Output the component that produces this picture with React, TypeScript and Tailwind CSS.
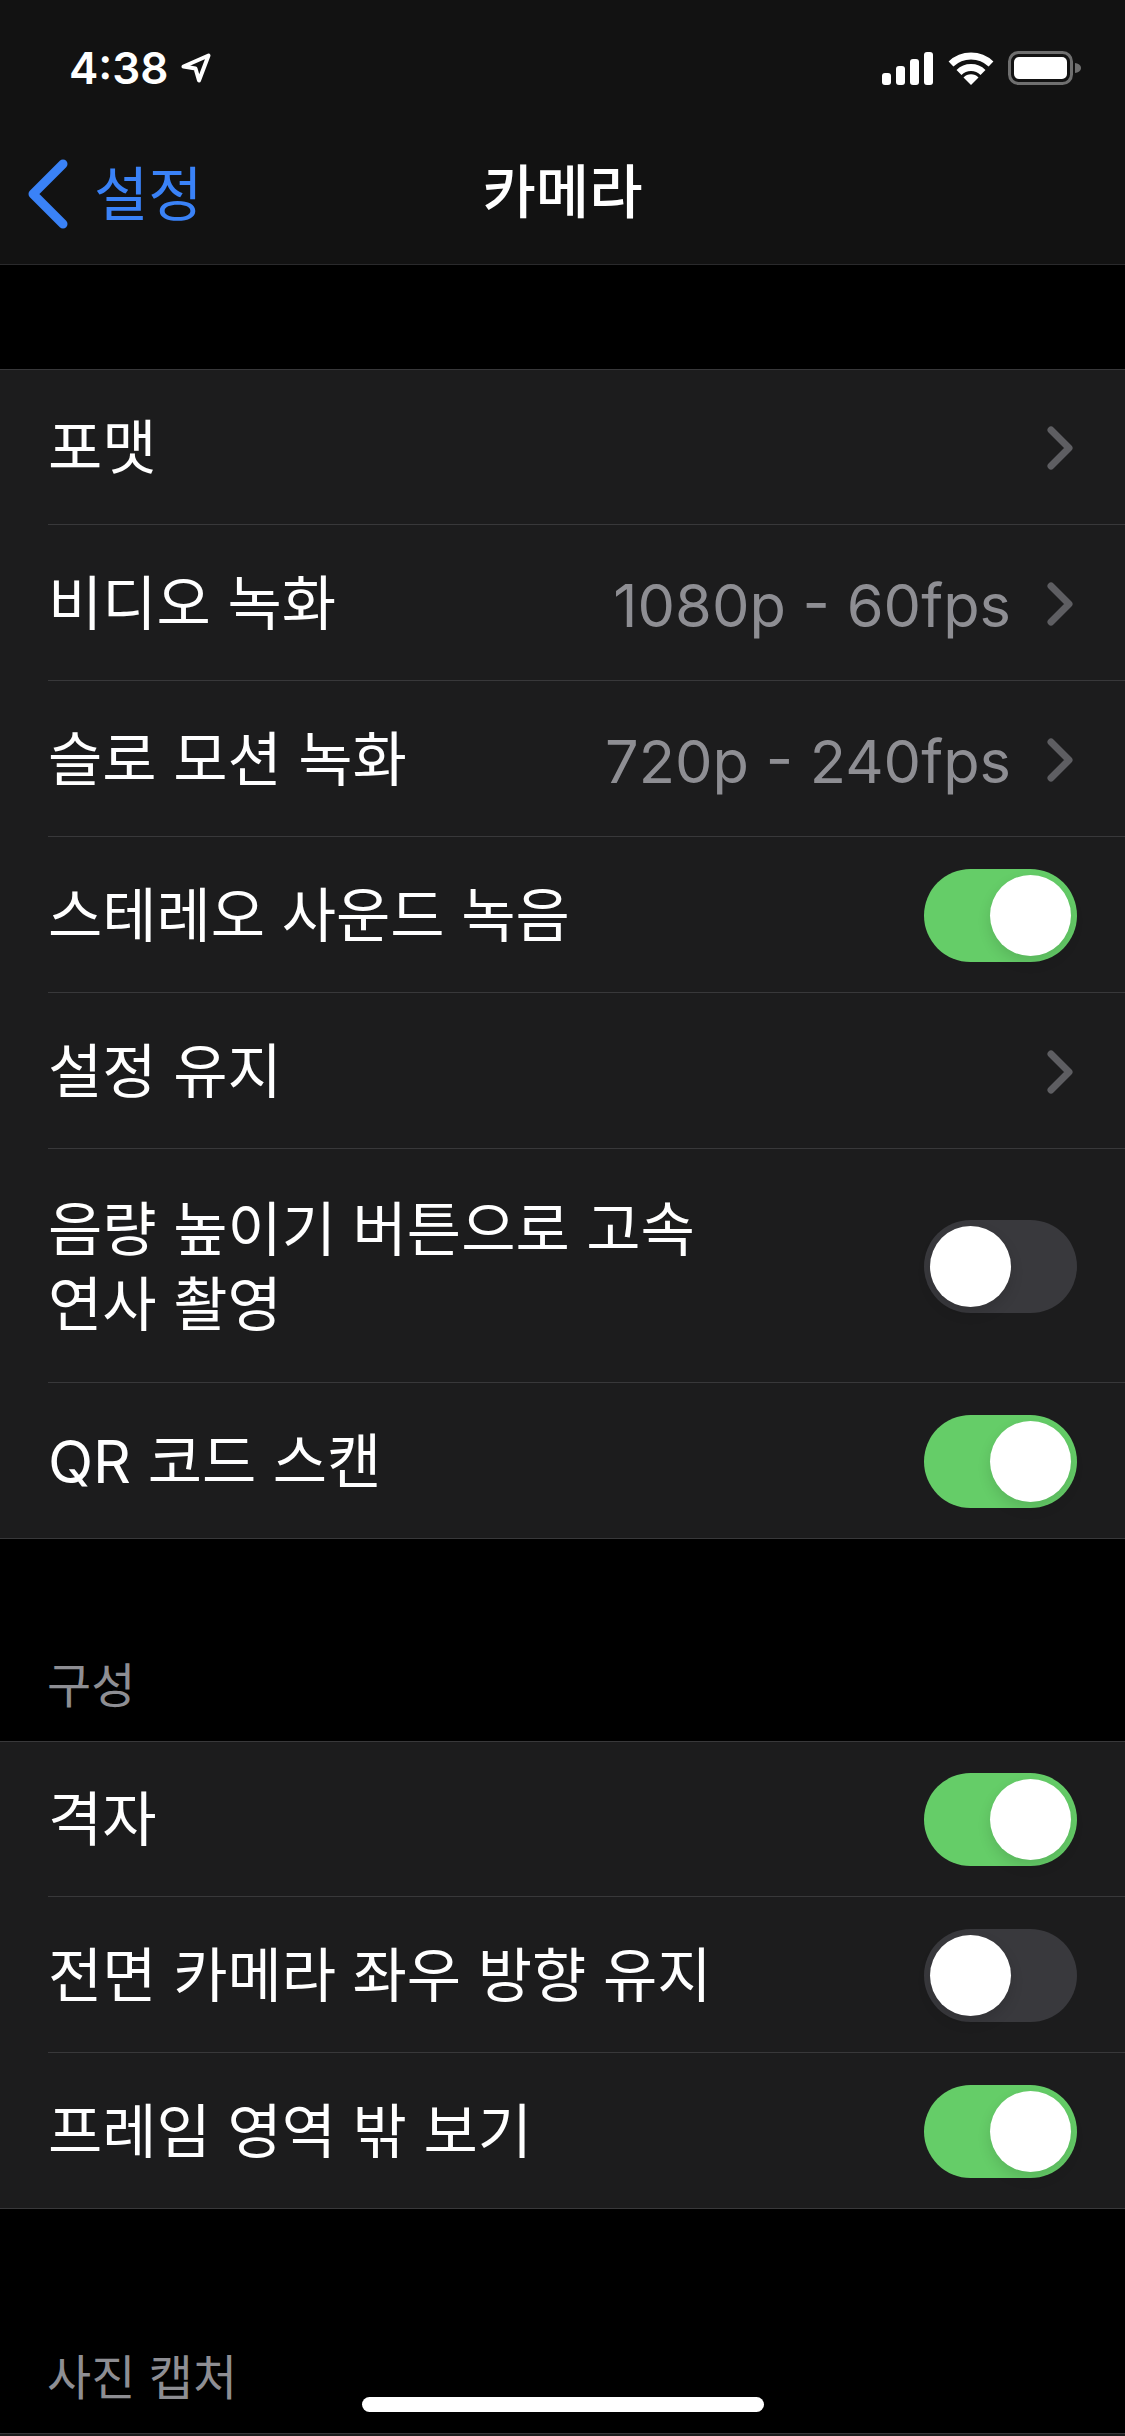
import { ReactNode } from 'react';

const KO = "font-['Inter','Noto_Sans_CJK_KR',sans-serif]";

function Switch({ on }: { on: boolean }) {
  return (
    <div
      className={`flex h-[93px] w-[153px] shrink-0 items-center rounded-full px-[6px] ${
        on ? 'justify-end bg-[#65cd68]' : 'justify-start bg-[#39393d]'
      }`}
    >
      <div className="h-[81px] w-[81px] rounded-full bg-white shadow-[0_6px_14px_rgba(0,0,0,0.12)]" />
    </div>
  );
}

function Chevron() {
  return (
    <svg width="26" height="44" viewBox="0 0 26 44" fill="none" className="shrink-0">
      <path d="M4 4L22 22L4 40" stroke="#5e5e62" strokeWidth="7" strokeLinecap="round" strokeLinejoin="round" />
    </svg>
  );
}

function Row({ children, right, tall, last }: { children: ReactNode; right: ReactNode; tall?: boolean; last?: boolean }) {
  return (
    <div
      className={`ml-[48px] flex items-center justify-between pr-[48px] pt-[2px] ${
        tall ? 'h-[234px]' : last ? 'h-[155px]' : 'h-[156px]'
      } ${last ? '' : 'border-b border-[#38383a]'}`}
    >
      <div className="text-[59px] leading-[75px] text-white">{children}</div>
      {right}
    </div>
  );
}

function Value({ text }: { text: string }) {
  return (
    <div className="flex items-center gap-[36px] pr-[4px]">
      <span className="pt-[5px] text-[59.5px] leading-none text-[#8e8e93]">{text}</span>
      <Chevron />
    </div>
  );
}

function Group({ children }: { children: ReactNode }) {
  return <div className="border-b border-[#38383a] bg-[#1c1c1d] shadow-[inset_0_1px_0_#38383a]">{children}</div>;
}

function SectionLabel({ text, height }: { text: string; height: string }) {
  return (
    <div className={`flex items-end px-[47px] pb-[23px] text-[48px] leading-[64px] text-[#8e8e93] ${height}`}>{text}</div>
  );
}

function StatusBar() {
  return (
    <div className="flex h-[136px] items-start justify-between pl-[69px] pr-[43px] pt-[41px]">
      <div className="flex items-center gap-[12px]">
        <span className="font-['Inter',sans-serif] text-[44px] font-semibold leading-[54px] text-white">4:38</span>
        <svg width="30" height="30" viewBox="0 0 30 30" fill="none">
          <path d="M2.5 13.5L27.5 2.5L18 27.5L14.5 15.5Z" stroke="white" strokeWidth="4" strokeLinejoin="round" />
        </svg>
      </div>
      <div className="flex items-center gap-[14px] pt-[10px]">
        <svg width="52" height="33" viewBox="0 0 52 33" fill="white">
          <rect x="0" y="21" width="9" height="12" rx="3" />
          <rect x="14" y="14" width="9" height="19" rx="3" />
          <rect x="28" y="7" width="9" height="26" rx="3" />
          <rect x="42" y="0" width="9" height="33" rx="3" />
        </svg>
        <svg width="46" height="33" viewBox="0 0 46 33" fill="none">
          <path d="M3 12A29 29 0 0 1 43 12" stroke="white" strokeWidth="7" />
          <path d="M11 20.5A17 17 0 0 1 35 20.5" stroke="white" strokeWidth="7" />
          <path d="M23 33L15.5 25.5A10.5 10.5 0 0 1 30.5 25.5Z" fill="white" />
        </svg>
        <svg width="74" height="34" viewBox="0 0 74 34" fill="none">
          <rect x="1.5" y="1.5" width="62" height="31" rx="9" stroke="#6f6f6f" strokeWidth="3" />
          <rect x="6" y="6" width="53" height="22" rx="5" fill="white" />
          <path d="M67 12C70 12.5 73 14 73 17C73 20 70 21.5 67 22Z" fill="#6f6f6f" />
        </svg>
      </div>
    </div>
  );
}

function NavBar() {
  return (
    <div className="relative flex h-[128px] items-center justify-center pb-[17px]">
      <div className="absolute left-[28px] top-[23px] flex items-center gap-[26px]">
        <svg width="40" height="70" viewBox="0 0 40 70" fill="none">
          <path d="M35 5L5 35L35 65" stroke="#3a82f7" strokeWidth="9" strokeLinecap="round" strokeLinejoin="round" />
        </svg>
        <span className="text-[59px] leading-none text-[#3a82f7]">설정</span>
      </div>
      <span className="text-[58px] font-medium leading-none text-white">카메라</span>
    </div>
  );
}

export default function App() {
  return (
    <div className={`relative h-[2436px] w-[1125px] overflow-hidden bg-black ${KO}`}>
      <div className="h-[265px] border-b border-[#2a2a2c] bg-[#121212]">
        <StatusBar />
        <NavBar />
      </div>

      <div className="h-[104px]" />

      <Group>
        <Row right={<div className="pr-[4px]"><Chevron /></div>}>포맷</Row>
        <Row right={<Value text="1080p - 60fps" />}>비디오 녹화</Row>
        <Row right={<Value text="720p - 240fps" />}>슬로 모션 녹화</Row>
        <Row right={<Switch on />}>스테레오 사운드 녹음</Row>
        <Row right={<div className="pr-[4px]"><Chevron /></div>}>설정 유지</Row>
        <Row tall right={<Switch on={false} />}>
          음량 높이기 버튼으로 고속
          <br />
          연사 촬영
        </Row>
        <Row last right={<Switch on />}>QR 코드 스캔</Row>
      </Group>

      <SectionLabel text="구성" height="h-[202px]" />

      <Group>
        <Row right={<Switch on />}>격자</Row>
        <Row right={<Switch on={false} />}>전면 카메라 좌우 방향 유지</Row>
        <Row last right={<Switch on />}>프레임 영역 밖 보기</Row>
      </Group>

      <SectionLabel text="사진 캡처" height="h-[224px]" />

      <Group>
        <div className="h-[40px]" />
      </Group>

      <div className="absolute bottom-[24px] left-[362px] h-[15px] w-[402px] rounded-full bg-white" />
    </div>
  );
}
